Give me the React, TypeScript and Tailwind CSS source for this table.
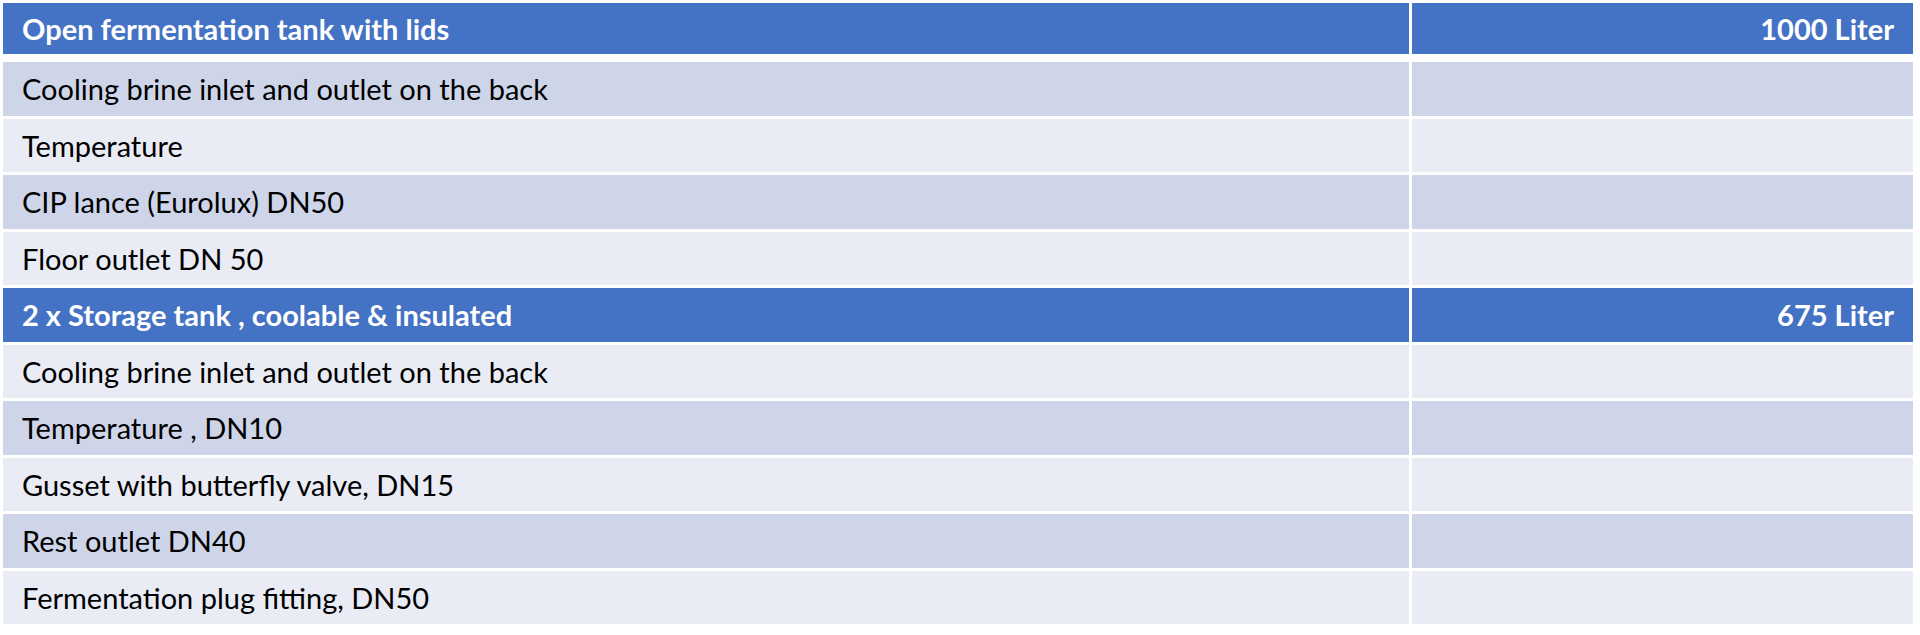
type Row = {
  label: string;
  value?: string;
  header?: boolean;
};

const rows: Row[] = [
  { label: 'Cooling brine inlet and outlet on the back' },
  { label: 'Temperature' },
  { label: 'CIP lance (Eurolux) DN50' },
  { label: 'Floor outlet DN 50' },
  { label: '2 x Storage tank , coolable & insulated', value: '675 Liter', header: true },
  { label: 'Cooling brine inlet and outlet on the back' },
  { label: 'Temperature , DN10' },
  { label: 'Gusset with butterfly valve, DN15' },
  { label: 'Rest outlet DN40' },
  { label: 'Fermentation plug fitting, DN50' },
];

function TableRow({ row, index }: { row: Row; index: number }) {
  const bg = row.header ? 'bg-[#4472c4]' : index % 2 === 0 ? 'bg-[#cfd5e9]' : 'bg-[#e9ebf5]';
  const text = row.header ? 'text-white font-bold' : 'text-black';

  return (
    <div className="flex h-[53.5px] gap-[3px]">
      <div className={`w-[1406px] flex items-center pl-[19px] ${bg} ${text}`}>{row.label}</div>
      <div className={`flex-1 flex items-center justify-end pr-[19px] ${bg} ${text}`}>{row.value}</div>
    </div>
  );
}

export default function App() {
  return (
    <div className="w-[1920px] h-[635px] bg-white pt-[3px] pl-[3px] font-['Lato',sans-serif] text-[29px]">
      <div className="w-[1910px] flex flex-col">
        <div className="flex h-[51px] gap-[3px] text-white font-bold">
          <div className="w-[1406px] flex items-center pl-[19px] bg-[#4472c4]">
            Open fermentation tank with lids
          </div>
          <div className="flex-1 flex items-center justify-end pr-[19px] bg-[#4472c4]">1000 Liter</div>
        </div>
        <div className="mt-[8px] flex flex-col gap-[3px]">
          {rows.map((row, i) => (
            <TableRow key={i} row={row} index={i} />
          ))}
        </div>
      </div>
    </div>
  );
}
